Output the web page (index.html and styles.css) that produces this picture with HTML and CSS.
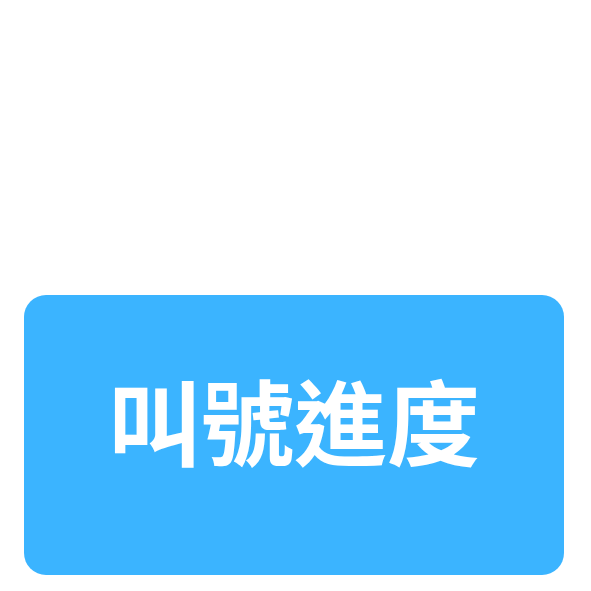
FILE: index.html
```html
<!DOCTYPE html>
<html lang="zh-Hant">
<head>
<meta charset="utf-8">
<link rel="stylesheet" href="styles.css">
</head>
<body>
<div class="page">
  <div class="card"><span class="label">叫號進度</span></div>
</div>
</body>
</html>
```
FILE: styles.css
```css
html, body { margin: 0; padding: 0; background: #ffffff; }
.page { width: 591px; height: 591px; padding-top: 295px; padding-left: 24px; box-sizing: border-box; }
.card {
  width: 540px; height: 280px; border-radius: 22px; background: #3bb4ff;
  display: flex; align-items: center; justify-content: center;
}
.label {
  font-family: "Noto Sans CJK TC", "Noto Sans CJK SC", sans-serif;
  font-weight: 700; font-size: 93px; color: #ffffff; line-height: 1;
  margin-bottom: 34px;
}
```
